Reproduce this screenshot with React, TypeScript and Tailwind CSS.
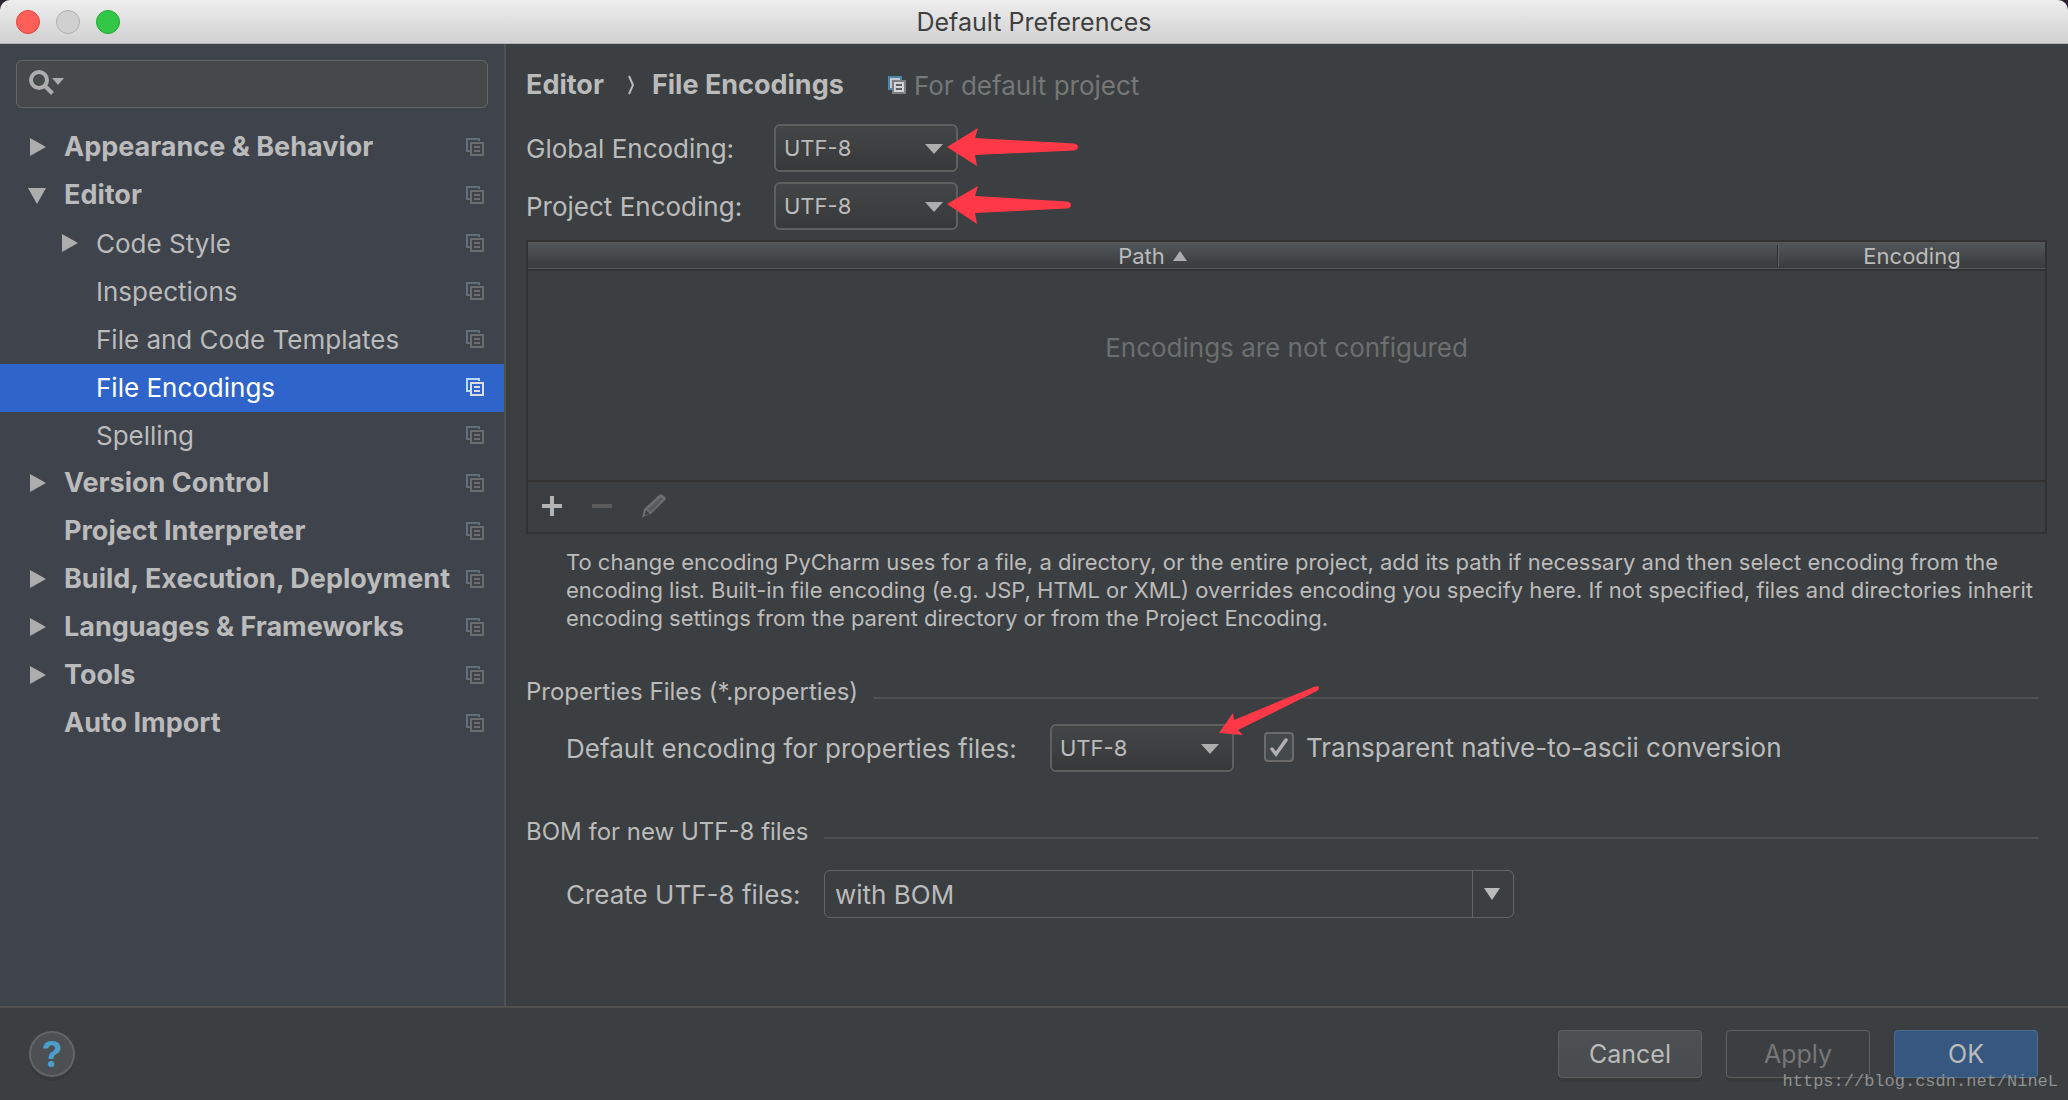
import React from "react";
import clsx from "clsx";

interface TreeItem {
  label: string;
  level: 0 | 1;
  arrow?: "open" | "closed";
}

const tree: TreeItem[] = [
  { label: "Appearance & Behavior", level: 0, arrow: "closed" },
  { label: "Editor", level: 0, arrow: "open" },
  { label: "Code Style", level: 1, arrow: "closed" },
  { label: "Inspections", level: 1 },
  { label: "File and Code Templates", level: 1 },
  { label: "File Encodings", level: 1 },
  { label: "Spelling", level: 1 },
  { label: "Version Control", level: 0, arrow: "closed" },
  { label: "Project Interpreter", level: 0 },
  { label: "Build, Execution, Deployment", level: 0, arrow: "closed" },
  { label: "Languages & Frameworks", level: 0, arrow: "closed" },
  { label: "Tools", level: 0, arrow: "closed" },
  { label: "Auto Import", level: 0 }
];

const encodings = ["UTF-8", "UTF-16", "ISO-8859-1", "US-ASCII", "GBK"];

function TreeArrow({ open }: { open: boolean }) {
  return (
    <svg className="h-[18px] w-[18px]" viewBox="0 0 18 18" fill="#adadad">
      {open ? <path d="M0 2h18L9 18z" /> : <path d="M2 0v18l16-9z" />}
    </svg>
  );
}

function CopyIcon({ back, front }: { back: string; front: string }) {
  return (
    <svg className="h-[18px] w-[18px] shrink-0" viewBox="0 0 18 18">
      <path d="M0 0h14v3h-2V2H2v10h2v2H0z" fill={back} />
      <path
        d="M4 4h14v14H4zM6 6v10h10V6zM8 8h6v2H8zM8 12h6v2H8z"
        fill={front}
        fillRule="evenodd"
      />
    </svg>
  );
}

function ProjectIcon() {
  return (
    <svg className="h-[18px] w-[18px] shrink-0" viewBox="0 0 18 18">
      <path d="M0 0h14v4H4v10H0z" fill="#4d88a8" />
      <path d="M2 2h10v2H4v8H2z" fill="#c4c8ca" />
      <path d="M4 4h14v14H4z" fill="#7b7f81" />
      <path d="M6 6h10v10H6z" fill="#d0d2d3" />
      <path d="M8 8h6v2H8zM8 12h6v2H8z" fill="#5b5f61" />
    </svg>
  );
}

function RedArrow({ short }: { short?: boolean }) {
  return (
    <svg
      className="pointer-events-none absolute top-1 left-[173px] z-10 h-[38px] w-[131px]"
      viewBox="0 0 131 38"
      fill="#ff3847"
    >
      {short ? (
        <path d="M0 18 31 0 28 10 120 15.500Q124 16 124 19 124 22 120 22.500L28 27 30 38z" />
      ) : (
        <path d="M0 19 31 0 28 10 127 15.500Q131 16 131 19 131 22 127 22.500L28 27 30 38z" />
      )}
    </svg>
  );
}

function RedArrowDown() {
  return (
    <svg
      className="pointer-events-none absolute -top-[38px] left-[169px] z-10 h-[50px] w-[100px]"
      viewBox="0 0 100 50"
      fill="#ff3847"
    >
      <path d="M0 47 14 27 15 34 96 .5Q99-.5 100 1.500 100 3.500 98 5L19 44 24 49z" />
    </svg>
  );
}

interface EncodingSelectProps {
  id: string;
  children: React.ReactNode;
}

function EncodingSelect({ id, children }: EncodingSelectProps) {
  const [value, setValue] = React.useState("UTF-8");
  return (
    <div className="relative">
      <select
        id={id}
        value={value}
        onChange={(e) => setValue(e.target.value)}
        className="block h-12 w-[184px] appearance-none rounded-md border-2 border-[#5e6060] bg-linear-to-b from-[#434647] to-[#37383a] pl-2 text-[22px] text-[#bbbbbb]"
      >
        {encodings.map((name) => (
          <option key={name}>{name}</option>
        ))}
      </select>
      <svg
        className="pointer-events-none absolute top-5 right-[15px] h-2.5 w-[18px]"
        viewBox="0 0 18 10"
        fill="#adadad"
      >
        <path d="M0 0h18L9 10z" />
      </svg>
      {children}
    </div>
  );
}

function TitleBar() {
  return (
    <header className="grid h-11 grid-cols-3 items-center rounded-t-[10px] border-b border-[#b5b5b5] bg-linear-to-b from-[#eeeeee] to-[#d1d1d1] px-4">
      <div className="flex gap-4">
        <button aria-label="Close" className="size-6 rounded-full border border-[#e0443e] bg-[#ff5f57]" />
        <button aria-label="Minimize" className="size-6 rounded-full border border-[#b0b0b0] bg-[#d0d0d0]" />
        <button aria-label="Zoom" className="size-6 rounded-full border border-[#24a636] bg-[#33c748]" />
      </div>
      <h1 className="pt-0.5 text-center text-[25px] text-[#404040]">Default Preferences</h1>
    </header>
  );
}

interface SidebarProps {
  selected: string;
  setSelected: React.Dispatch<React.SetStateAction<string>>;
}

function Sidebar({ selected, setSelected }: SidebarProps) {
  return (
    <aside className="w-[506px] shrink-0 border-r-2 border-[#515151] bg-[#3f434c]">
      <div className="px-4 pt-4 pb-4">
        <label className="flex h-12 items-center rounded-md border border-[#646464] bg-[#454949] pb-1 pl-3">
          <svg className="h-[26px] w-9 shrink-0" viewBox="0 0 36 26">
            <circle cx="10" cy="11" r="8" fill="none" stroke="#adadad" strokeWidth="4" />
            <path d="m15.500 16.500 8 8" stroke="#adadad" strokeWidth="4" />
            <path d="M23 9h12l-6 7z" fill="#adadad" />
          </svg>
          <input aria-label="Search" className="min-w-0 flex-1 px-2 text-[26px] outline-none" />
        </label>
      </div>
      <ul>
        {tree.map((item) => {
          const active = item.label === selected;
          return (
            <li key={item.label}>
              <button
                onClick={() => setSelected(item.label)}
                className={clsx(
                  "flex h-12 w-full items-center pr-5 pb-0.5 text-left whitespace-nowrap",
                  item.level === 0 ? "pl-7 text-[27px] font-bold" : "pl-[60px] text-[26px]",
                  active ? "bg-[#2f65ca] text-white" : "text-[#bbbbbb]"
                )}
              >
                <span className="mr-[18px] w-[18px] shrink-0">
                  {item.arrow && <TreeArrow open={item.arrow === "open"} />}
                </span>
                <span className="flex-1">{item.label}</span>
                {active ? (
                  <CopyIcon back="#b5dcf5" front="#dcdcdc" />
                ) : (
                  <CopyIcon back="#5f6f7b" front="#6c6c6c" />
                )}
              </button>
            </li>
          );
        })}
      </ul>
    </aside>
  );
}

function EncodingTable() {
  return (
    <section className="border-2 border-[#323232]">
      <table className="w-full table-fixed">
        <thead>
          <tr className="h-7 border-b-2 border-[#2f3132] bg-linear-to-b from-[#54585a] to-[#393b3c] text-[22px] leading-[26px]">
            <th className="p-0 font-normal">
              <span className="flex items-center justify-center gap-2">
                Path
                <svg className="h-2.5 w-3.5" viewBox="0 0 14 10" fill="#adadad">
                  <path d="M0 10h14L7 0z" />
                </svg>
              </span>
            </th>
            <th className="w-[268px] p-0 font-normal">
              <span className="flex items-center">
                <span className="h-[22px] w-0.5 border-r border-l border-r-[#5f6264] border-l-[#2b2d2e]" />
                <span className="flex-1">Encoding</span>
              </span>
            </th>
          </tr>
        </thead>
        <tbody>
          <tr>
            <td colSpan={2} className="h-[210px] p-0 pb-14 text-center text-[26px] text-[#6c6e70]">
              Encodings are not configured
            </td>
          </tr>
        </tbody>
      </table>
      <div className="flex h-[52px] items-center gap-[30px] border-t-2 border-[#323232] px-3.5 pb-0.5">
        <button aria-label="Add">
          <svg className="size-5" viewBox="0 0 20 20" fill="#b4b4b4">
            <path d="M8 0h4v8h8v4h-8v8H8v-8H0V8h8z" />
          </svg>
        </button>
        <button aria-label="Remove">
          <svg className="size-5" viewBox="0 0 20 20" fill="#5b5c5a">
            <path d="M0 8h20v4H0z" />
          </svg>
        </button>
        <button aria-label="Edit">
          <svg className="size-6" viewBox="0 0 24 24">
            <path d="M0 24 2 15 17 1Q19-1 22 2T23 6L9 20 3 22z" fill="#6b6d6e" />
            <path d="M6 15 19 3l2 2L9 18z" fill="#585a5b" />
            <path d="m4 16 4 4-5 1z" fill="#3c3f41" />
          </svg>
        </button>
      </div>
    </section>
  );
}

function GroupTitle({ children }: { children: React.ReactNode }) {
  return (
    <div className="flex items-center gap-4 pr-2 text-[24px] leading-8">
      <h2>{children}</h2>
      <div className="mt-3 h-0.5 flex-1 bg-[#515151]" />
    </div>
  );
}

function Settings() {
  const [transparent, setTransparent] = React.useState(true);
  return (
    <main className="min-w-0 flex-1 pt-5 pr-[21px] pl-5 text-[26px] text-[#bbbbbb]">
      <nav className="flex h-10 items-center pt-0.5 text-[27px] font-bold">
        <a href="#editor">Editor</a>
        <svg className="mr-4 ml-6 h-5 w-2" viewBox="0 0 8 20" fill="none" stroke="#bbbbbb" strokeWidth="2">
          <path d="M1 1 5 10 1 19" />
        </svg>
        <a href="#file-encodings">File Encodings</a>
        <span className="ml-11 flex items-center gap-2 text-[26px] font-normal text-[#777777]">
          <ProjectIcon />
          For default project
        </span>
      </nav>

      <div className="mt-5 grid grid-cols-[248px_auto] items-center justify-start gap-y-2.5">
        <label htmlFor="global">Global Encoding:</label>
        <EncodingSelect id="global">
          <RedArrow />
        </EncodingSelect>
        <label htmlFor="project">Project Encoding:</label>
        <EncodingSelect id="project">
          <RedArrow short />
        </EncodingSelect>
      </div>

      <div className="mt-2.5">
        <EncodingTable />
      </div>

      <p className="mt-3.5 pl-10 text-[22px] leading-7">
        To change encoding PyCharm uses for a file, a directory, or the entire project, add its path if necessary and then select encoding from the
        encoding list. Built-in file encoding (e.g. JSP, HTML or XML) overrides encoding you specify here. If not specified, files and directories inherit
        encoding settings from the parent directory or from the Project Encoding.
      </p>

      <div className="mt-11">
        <GroupTitle>Properties Files (*.properties)</GroupTitle>
      </div>
      <div className="mt-4 flex items-center pl-10">
        <label htmlFor="properties" className="w-[484px]">
          Default encoding for properties files:
        </label>
        <EncodingSelect id="properties">
          <RedArrowDown />
        </EncodingSelect>
        <label className="ml-[30px] flex items-center gap-3 pb-0.5">
          <span className="grid">
            <input
              type="checkbox"
              checked={transparent}
              onChange={(e) => setTransparent(e.target.checked)}
              className="col-start-1 row-start-1 size-[30px] appearance-none rounded border-2 border-[#6b6b6b] bg-[#43494a]"
            />
            {transparent && (
              <svg className="pointer-events-none col-start-1 row-start-1 size-[30px]" viewBox="0 0 30 30" fill="none">
                <path d="m8 17 4 5L22 8" stroke="#b0b0b0" strokeWidth="3.500" strokeLinecap="round" />
              </svg>
            )}
          </span>
          Transparent native-to-ascii conversion
        </label>
      </div>

      <div className="mt-11">
        <GroupTitle>BOM for new UTF-8 files</GroupTitle>
      </div>
      <div className="mt-[22px] flex items-center pl-10">
        <label htmlFor="bom" className="w-[258px]">
          Create UTF-8 files:
        </label>
        <div className="relative">
          <select
            id="bom"
            className="block h-12 w-[690px] appearance-none rounded-md border border-[#646464] bg-[#3c3f41] pl-2.5 text-[26px]"
          >
            <option>with BOM</option>
            <option>with NO BOM</option>
          </select>
          <div className="pointer-events-none absolute top-0 right-0 grid h-12 w-[42px] place-items-center border-l border-[#646464] pr-1">
            <svg className="h-3 w-4" viewBox="0 0 16 12" fill="#bbbbbb">
              <path d="M0 0h16L8 12z" />
            </svg>
          </div>
        </div>
      </div>
    </main>
  );
}

function Footer() {
  return (
    <footer className="relative flex h-[94px] items-center border-t-2 border-[#515151] pr-[30px] pl-[29px] text-[25px] text-[#bbbbbb]">
      <button
        aria-label="Help"
        className="size-[46px] rounded-full border-2 border-[#646464] bg-[#4c5052] text-[36px] leading-[42px] font-bold text-[#4d9fca] shadow-[0_4px_0_#38393b]"
      >
        ?
      </button>
      <div className="ml-auto flex gap-6">
        <button className="h-12 w-36 rounded border border-[#5e6060] bg-linear-to-b from-[#4c5052] to-[#484c4e] pt-0.5 shadow-[0_4px_0_#38393b]">
          Cancel
        </button>
        <button className="h-12 w-36 rounded border border-[#5e6060] pt-0.5 text-[#777777] shadow-[0_4px_0_#38393b]">
          Apply
        </button>
        <button className="h-12 w-36 rounded border border-[#4c708c] bg-[#365880] pt-0.5 shadow-[0_4px_0_#38393b]">
          OK
        </button>
      </div>
      <span className="pointer-events-none absolute right-2.5 bottom-1.5 font-['Liberation_Mono',monospace] text-[17px] text-[#8f9090]">
        https://blog.csdn.net/NineL
      </span>
    </footer>
  );
}

export default function App() {
  const [selected, setSelected] = React.useState("File Encodings");
  return (
    <div className="bg-[#2b2233] font-[Inter,sans-serif]">
      <div className="flex min-h-screen flex-col rounded-t-[10px] bg-[#3c3f41]">
        <TitleBar />
        <div className="flex flex-1">
          <Sidebar {...{ selected, setSelected }} />
          <Settings />
        </div>
        <Footer />
      </div>
    </div>
  );
}
